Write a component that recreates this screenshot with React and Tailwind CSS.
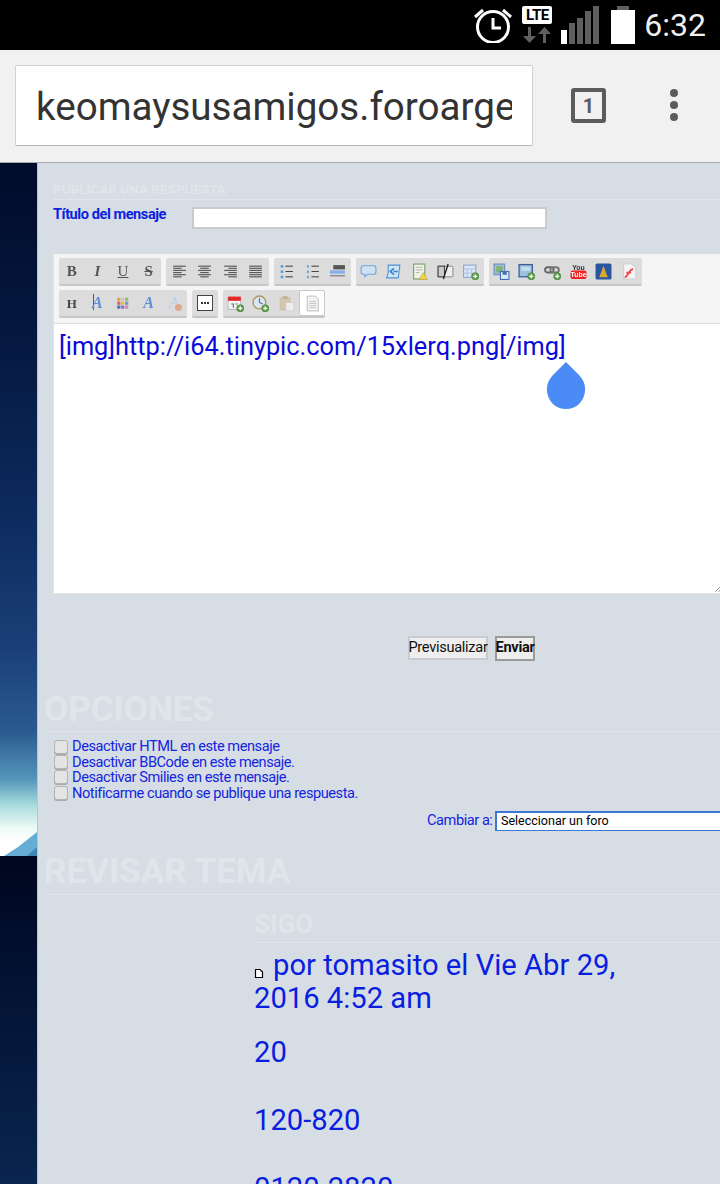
import React from "react";

const Svg = ({ children, size = 17 }) => (
  <svg width={size} height={size} viewBox="0 0 16 16" className="blur-[0.4px]">{children}</svg>
);
const Plus = () => (
  <g>
    <circle cx="12.5" cy="12.5" r="3.4" fill="#5f9e4a" stroke="#3f7a30" strokeWidth="0.5" />
    <path d="M12.5 10.6v3.8M10.6 12.5h3.8" stroke="#fff" strokeWidth="1.2" />
  </g>
);
const Letter = ({ c, cls }) => <span className={`font-['Liberation_Serif',serif] leading-none blur-[0.4px] ${cls}`}>{c}</span>;
const Lines = ({ rows }) => (
  <Svg>
    {rows.map(([x1, x2], i) => (
      <path key={i} d={`M${x1} ${3 + i * 2}H${x2}`} stroke="#5a5a5a" strokeWidth="1.1" />
    ))}
  </Svg>
);
const ListIcon = ({ num }) => (
  <Svg>
    {[3, 8, 13].map((y) => (
      <g key={y}>
        <rect x={num ? 3 : 2.5} y={y - 1} width={num ? 1.5 : 2.5} height="2.4" fill="#5b9bd5" />
        <path d={`M7 ${y}H14`} stroke="#444" strokeWidth="1" />
      </g>
    ))}
  </Svg>
);
const A = ({ cls }) => <Letter c="A" cls={`text-[16px] font-bold italic ${cls}`} />;

const row1 = [
  [
    <Letter c="B" cls="text-[15px] font-bold text-[#555]" />,
    <Letter c="I" cls="text-[15px] font-bold italic text-[#555]" />,
    <Letter c="U" cls="text-[15px] underline text-[#555]" />,
    <Letter c="S" cls="text-[15px] font-bold line-through text-[#555]" />,
  ],
  [
    <Lines rows={[[2, 14], [2, 10], [2, 14], [2, 10], [2, 14], [2, 10]]} />,
    <Lines rows={[[2, 14], [4, 12], [2, 14], [4, 12], [2, 14], [4, 12]]} />,
    <Lines rows={[[2, 14], [6, 14], [2, 14], [6, 14], [2, 14], [6, 14]]} />,
    <Lines rows={[[2, 14], [2, 14], [2, 14], [2, 14], [2, 14], [2, 14]]} />,
  ],
  [
    <ListIcon />,
    <ListIcon num />,
    <Svg>
      <rect x="4" y="2" width="11" height="4" fill="#555" />
      <rect x="1" y="7" width="14" height="3" fill="#7fb0e6" />
      <path d="M1 12H15" stroke="#8f8f8f" strokeWidth="1.4" />
    </Svg>,
  ],
  [
    <Svg>
      <path d="M3 2.5H13Q15 2.5 15 5V8Q15 10.5 13 10.5H7L4.5 13V10.5H3Q1 10.5 1 8V5Q1 2.5 3 2.5Z" fill="#cfe3f5" stroke="#6fa4d8" strokeWidth="1" />
    </Svg>,
    <Svg>
      <path d="M3 2H14L12.5 14H1.5L3 9Z" fill="#cfe3f5" stroke="#4f8fd0" strokeWidth="1" />
      <path d="M8.5 5L5 8L8.5 11M8 8H12" stroke="#2f7fd0" strokeWidth="1.5" fill="none" />
    </Svg>,
    <Svg>
      <rect x="2.5" y="1" width="10.5" height="14" fill="#f1f3e6" stroke="#6f9f66" strokeWidth="1" />
      <path d="M4.5 4H11M4.5 6.5H11M4.5 9H8" stroke="#a9a9a9" strokeWidth="0.8" />
      <path d="M11.5 9L15.5 15.5H7.5Z" fill="#f1d44a" stroke="#b9972a" strokeWidth="0.5" />
    </Svg>,
    <Svg>
      <rect x="1" y="3" width="14" height="10" rx="1" fill="#eee" stroke="#777" strokeWidth="0.8" />
      <rect x="1" y="3" width="6" height="10" fill="#ccc" stroke="#333" strokeWidth="0.9" />
      <path d="M10.5 1L6 15" stroke="#222" strokeWidth="1.3" />
    </Svg>,
    <Svg>
      <rect x="1.5" y="2" width="11.5" height="11.5" fill="#dbe6f4" stroke="#88a5cc" strokeWidth="1" />
      <path d="M1.5 5.5H13M5 5.5V13.5M9 5.5V13.5M1.5 9.5H13" stroke="#a9bedb" strokeWidth="0.8" />
      <Plus />
    </Svg>,
  ],
  [
    <Svg>
      <rect x="1" y="1" width="10" height="10" fill="#9dbce0" stroke="#6a8dbb" strokeWidth="1" />
      <rect x="3" y="3" width="6" height="6" fill="#7fb36f" />
      <rect x="7" y="8" width="8" height="7.5" fill="#dce7f5" stroke="#3f6fb0" strokeWidth="1" />
      <rect x="9" y="8.5" width="4" height="2.5" fill="#3f6fb0" />
    </Svg>,
    <Svg>
      <rect x="1" y="1.5" width="12.5" height="11.5" fill="#9cc0e0" stroke="#3a5f96" strokeWidth="1.2" />
      <rect x="3" y="3.5" width="8.5" height="4" fill="#c4dcf0" />
      <Plus />
    </Svg>,
    <Svg>
      <rect x="1" y="4" width="8" height="5" rx="2.5" fill="none" stroke="#666" strokeWidth="1.8" />
      <rect x="6" y="4" width="8" height="5" rx="2.5" fill="none" stroke="#777" strokeWidth="1.8" />
      <Plus />
    </Svg>,
    <Svg>
      <text x="8" y="6.2" textAnchor="middle" fontSize="6.5" fontWeight="700" fontFamily="'Liberation Sans',sans-serif" fill="#333">You</text>
      <rect x="0.5" y="7" width="15" height="8" rx="1.8" fill="#ee2222" />
      <text x="8" y="13.4" textAnchor="middle" fontSize="6.5" fontWeight="700" fontFamily="'Liberation Sans',sans-serif" fill="#fff">Tube</text>
    </Svg>,
    <Svg>
      <rect x="0.5" y="0.5" width="15" height="15" rx="1.5" fill="#2a55a0" />
      <path d="M8 2.5L10 8L12 13.5H4L6 8Z" fill="#d6a92f" />
    </Svg>,
    <Svg>
      <path d="M2.5 1H10.5L14 4.5V15H2.5Z" fill="#f4f4f4" stroke="#cfcfcf" strokeWidth="1" />
      <path d="M3.5 13.5C7 13 7 6 11.5 5.5M5 9H9.5" stroke="#f04848" strokeWidth="1.7" fill="none" />
    </Svg>,
  ],
];

const row2 = [
  [
    <Letter c="H" cls="text-[13px] font-bold text-[#444]" />,
    <span className="relative flex items-center">
      <span className="absolute left-[1px] top-[-1px] h-[16px] w-[1px] bg-[#e02020]" />
      <A cls="text-[#5b8fd8]" />
    </span>,
    <Svg>
      {[0, 1, 2].map((r) =>
        [0, 1, 2].map((c) => (
          <rect key={`${r}${c}`} x={3 + c * 3.7} y={2.5 + r * 3.7} width="3" height="3" fill={[["#e0a050", "#c9c9c9", "#8fc070"], ["#e06060", "#e8c040", "#60a0d0"], ["#5070c0", "#9070c0", "#e080b0"]][r][c]} />
        ))
      )}
    </Svg>,
    <A cls="text-[#5b8fd8]" />,
    <span className="relative flex items-center">
      <A cls="text-[#bfd0ea]" />
      <span className="absolute right-[-2px] bottom-[0px] h-[7px] w-[7px] rounded-full bg-[#e0a88a]" />
    </span>,
  ],
  [
    <span className="flex h-[16px] w-[16px] items-center justify-center gap-[1px] border border-[#444] bg-white blur-[0.2px]">
      <span className="h-[2px] w-[2px] bg-[#333]" />
      <span className="h-[2px] w-[2px] bg-[#333]" />
      <span className="h-[2px] w-[2px] bg-[#333]" />
    </span>,
  ],
  [
    <Svg>
      <rect x="1" y="2.5" width="12" height="11" fill="#f4f4f4" stroke="#aaa" strokeWidth="0.7" />
      <rect x="1" y="1.5" width="12" height="4" fill="#e02828" />
      <path d="M4 8.5H6V12M8 8.5H10" stroke="#666" strokeWidth="1" fill="none" />
      <Plus />
    </Svg>,
    <Svg>
      <circle cx="7" cy="7" r="6" fill="#dbe6f4" stroke="#b39a5f" strokeWidth="1.4" />
      <path d="M7 3V7L10 8.5" stroke="#3f6fb0" strokeWidth="1" fill="none" />
      <Plus />
    </Svg>,
    <Svg>
      <rect x="2" y="2.5" width="9.5" height="11.5" rx="1" fill="#d6c6ad" stroke="#c2b49c" strokeWidth="0.6" />
      <rect x="4.5" y="1" width="4.5" height="2.8" fill="#c2b49c" />
      <rect x="7.5" y="7" width="7.5" height="8" fill="#eee" stroke="#ccc" strokeWidth="0.7" />
    </Svg>,
    <Svg>
      <path d="M3 1H10.5L13.5 4V15H3Z" fill="#f3f3f3" stroke="#b5b5b5" strokeWidth="0.8" />
      <path d="M5 6H11.5M5 8H11.5M5 10H11.5M5 12H11.5" stroke="#bdbdbd" strokeWidth="0.8" />
    </Svg>,
  ],
];

const Group = ({ items, activeLast }) => (
  <div className="flex h-[28px] items-center rounded-[2px] border-b-2 border-[#c6c6c6] bg-[#dcdcdc]">
    {items.map((it, i) => (
      <div
        key={i}
        className={
          activeLast && i === items.length - 1
            ? "flex h-[26px] w-[25.6px] items-center justify-center rounded-[2px] border border-[#c8c8c8] bg-white"
            : "flex h-[26px] w-[25.6px] items-center justify-center"
        }
      >
        {it}
      </div>
    ))}
  </div>
);

const Head = ({ children, cls }) => (
  <div className={`whitespace-nowrap border-b border-[#e0e5ea] font-bold uppercase leading-none text-[#e0e5ea] ${cls}`}>{children}</div>
);

const Check = ({ children }) => (
  <div className="flex h-[15.4px] items-center text-[14.6px] leading-none tracking-[-0.45px] text-[#1425e0]">
    <span className="mr-[4px] h-[14px] w-[14px] shrink-0 rounded-[3px] border border-[#b3b3b3] bg-[#e4e4e4] shadow-[0_1px_0_#aaa]" />
    <span className="whitespace-nowrap">{children}</span>
  </div>
);

export default function App() {
  return (
    <div className="flex h-[1184px] w-[720px] flex-col overflow-hidden bg-black font-['Roboto',sans-serif]">
      {/* status bar */}
      <div className="flex h-[50px] shrink-0 items-center justify-end bg-black pr-[14px]">
        <svg width="42" height="40" viewBox="0 0 42 40" className="mb-[4px] mr-[8px]">
          <circle cx="21" cy="24" r="15.5" fill="none" stroke="#fff" strokeWidth="3" />
          <path d="M21 15V25H29" fill="none" stroke="#fff" strokeWidth="3" />
          <path d="M3 14L11 7M39 14L31 7" stroke="#fff" strokeWidth="3" />
        </svg>
        <div className="mr-[9px] flex w-[30px] flex-col items-center">
          <div className="flex h-[18px] w-[30px] items-center justify-center rounded-[2px] bg-white text-[15px] font-bold leading-none tracking-[-0.5px] text-black">LTE</div>
          <svg width="28" height="18" viewBox="0 0 28 18" className="mt-[2px]">
            <path d="M8 1V10H13L6.5 17L0 10H5V1Z" fill="#5f5f5f" />
            <path d="M20 17V8H15L21.5 1L28 8H23V17Z" fill="#5f5f5f" />
          </svg>
        </div>
        <svg width="38" height="38" viewBox="0 0 38 38" className="mb-[6px] mr-[12px] self-end">
          <rect x="0" y="24" width="6" height="14" fill="#fff" />
          <rect x="8" y="17" width="6" height="21" fill="#5f5f5f" />
          <rect x="16" y="12" width="6" height="26" fill="#5f5f5f" />
          <rect x="24" y="5" width="6" height="33" fill="#5f5f5f" />
          <rect x="32" y="0" width="6" height="38" fill="#5f5f5f" />
        </svg>
        <svg width="24" height="38" viewBox="0 0 24 38" className="mb-[6px] mr-[9px] self-end">
          <rect x="6" y="0" width="12" height="5" fill="#5f5f5f" />
          <rect x="0" y="4" width="24" height="34" fill="#fff" />
        </svg>
        <span className="text-[32px] leading-none text-[#f0f0f0]">6:32</span>
      </div>

      {/* browser toolbar */}
      <div className="flex h-[113px] shrink-0 items-start border-b border-[#a8aaad] bg-[#f1f1f1] pl-[15px] pt-[15px]">
        <div className="flex h-[81px] w-[518px] shrink-0 items-center rounded-[2px] border border-[#d0d0d0] border-b-[#b5b5b5] bg-white pl-[20px] pr-[20px]">
          <div className="mt-[3px] overflow-hidden whitespace-nowrap text-[38.6px] leading-[48px] text-[#333]">keomaysusamigos.foroarge</div>
        </div>
        <div className="ml-[38px] mt-[23px] flex h-[35px] w-[35px] items-center justify-center rounded-[3px] border-[4px] border-[#5c5c5c] text-[20px] font-bold leading-none text-[#5c5c5c]">1</div>
        <div className="ml-[64px] mt-[24px] flex flex-col gap-[4px]">
          <span className="h-[8px] w-[8px] rounded-full bg-[#5c5c5c]" />
          <span className="h-[8px] w-[8px] rounded-full bg-[#5c5c5c]" />
          <span className="h-[8px] w-[8px] rounded-full bg-[#5c5c5c]" />
        </div>
      </div>

      <div className="flex min-h-0 flex-1">
        {/* left background strip */}
        <div className="flex w-[37px] shrink-0 flex-col">
          <div className="relative h-[693px] shrink-0 overflow-hidden bg-[linear-gradient(180deg,#010b2a_0%,#051840_25%,#0c2a5c_50%,#1a3f78_70%,#2a5a90_82%,#5596ba_89%,#a5dadc_92.5%,#eefaf5_96%,#ffffff_98%)]">
            <svg width="37" height="24" viewBox="0 0 37 24" className="absolute bottom-0 left-0">
              <path d="M4 24L18 15L37 0V24Z" fill="#66add3" />
              <path d="M27 24L37 15V24Z" fill="#3f86b5" />
            </svg>
          </div>
          <div className="flex-1 bg-[linear-gradient(180deg,#00061f_0%,#02102f_30%,#0a2550_100%)]" />
        </div>
        <div className="w-[1px] shrink-0 bg-[#9fc9ee]" />

        {/* forum panel */}
        <div className="relative min-w-0 flex-1 overflow-hidden bg-[#d6dde4]">
          <div className="ml-[15px] mt-[16px] h-[21px] border-b border-[#e0e5ea] text-[13.5px] font-bold uppercase leading-[21px] text-[#e0e5ea]">Publicar una respuesta</div>

          <div className="ml-[15px] mt-[7px] flex h-[22px]">
            <div className="w-[139px] shrink-0 whitespace-nowrap text-[14.6px] font-bold leading-[14px] tracking-[-0.45px] text-[#0b1fe0]">Título del mensaje</div>
            <div className="h-[22px] w-[355px] border-2 border-[#c9cbce] bg-white" />
          </div>

          {/* editor */}
          <div className="ml-[15px] mt-[25px] h-[340px] w-[680px] border-b border-l border-[#e3e3e3] bg-[#f5f5f5]">
            <div className="flex h-[70px] flex-col gap-[4px] border-b border-[#dfdfdf] pl-[5px] pt-[4px]">
              <div className="flex gap-[5px]">
                {row1.map((g, i) => (
                  <Group key={i} items={g} />
                ))}
              </div>
              <div className="flex gap-[5px]">
                {row2.map((g, i) => (
                  <Group key={i} items={g} activeLast={i === 2} />
                ))}
              </div>
            </div>
            <div className="relative h-[269px] bg-white pl-[5px] pt-[6px]">
              <div className="whitespace-nowrap text-[25.35px] leading-[32px] text-[#0a0ad8]">[img]http://i64.tinypic.com/15xlerq.png[/img]</div>
              <svg width="40" height="48" viewBox="0 0 40 48" className="absolute left-[492px] top-[38px]">
                <path d="M20 0L33 13C42 22 40 34 34 41C27 49 13 49 6 41C0 34 -2 22 7 13Z" fill="#4a8bf5" />
              </svg>
              <svg width="6" height="6" viewBox="0 0 6 6" className="absolute left-[661px] top-[262px]">
                <path d="M0 6L6 0M3 6L6 3" stroke="#888" strokeWidth="0.8" />
              </svg>
            </div>
          </div>

          {/* buttons */}
          <div className="ml-[370px] mt-[42px] flex items-start gap-[7px] text-[14.6px] leading-none tracking-[-0.3px] text-[#111]">
            <div className="flex h-[24px] w-[80px] items-center justify-center whitespace-nowrap border-2 border-[#c9cbce] bg-[#eeeeee] pb-[2px]">Previsualizar</div>
            <div className="flex h-[25px] w-[40px] items-center justify-center border-2 border-[#9a9a9a] bg-[#eeeeee] pb-[2px] font-bold">Enviar</div>
          </div>

          <Head cls="ml-[6px] mt-[31px] h-[40px] text-[35px]">Opciones</Head>

          <div className="ml-[16px] mt-[7px]">
            <Check>Desactivar HTML en este mensaje</Check>
            <Check>Desactivar BBCode en este mensaje.</Check>
            <Check>Desactivar Smilies en este mensaje.</Check>
            <Check>Notificarme cuando se publique una respuesta.</Check>
          </div>

          <div className="mt-[10px] flex h-[20px] items-center whitespace-nowrap pl-[389px]">
            <span className="mr-[4px] w-[64px] shrink-0 text-[14.6px] leading-none tracking-[-0.45px] text-[#1425e0]">Cambiar a:</span>
            <div className="flex h-[20px] w-[240px] shrink-0 items-center border-2 border-b border-[#3b78d4] bg-white pl-[4px] text-[12.5px] leading-none text-black">Seleccionar un foro</div>
          </div>

          <Head cls="ml-[6px] mt-[23px] h-[41px] text-[35px]">Revisar tema</Head>

          <div className="ml-[216px]">
            <Head cls="mt-[13px] h-[35px] pt-[3px] text-[26px]">Sigo</Head>
            <div className="mt-[6px] w-[400px] text-[29.2px] leading-[33.5px] text-[#0a1ee0]">
              <svg width="10" height="12" viewBox="0 0 10 12" className="mr-[9px] inline-block align-[-4px]">
                <path d="M1.5 2.5H6L8.5 5V10.5H1.5Z" fill="#fff" stroke="#000" strokeWidth="1.2" />
              </svg>
              por tomasito el Vie Abr 29, 2016 4:52 am
              <div className="mt-[20.5px]">20</div>
              <div className="mt-[34.5px]">120-820</div>
              <div className="mt-[34.5px]">0120-2820</div>
            </div>
          </div>
        </div>
      </div>
    </div>
  );
}
